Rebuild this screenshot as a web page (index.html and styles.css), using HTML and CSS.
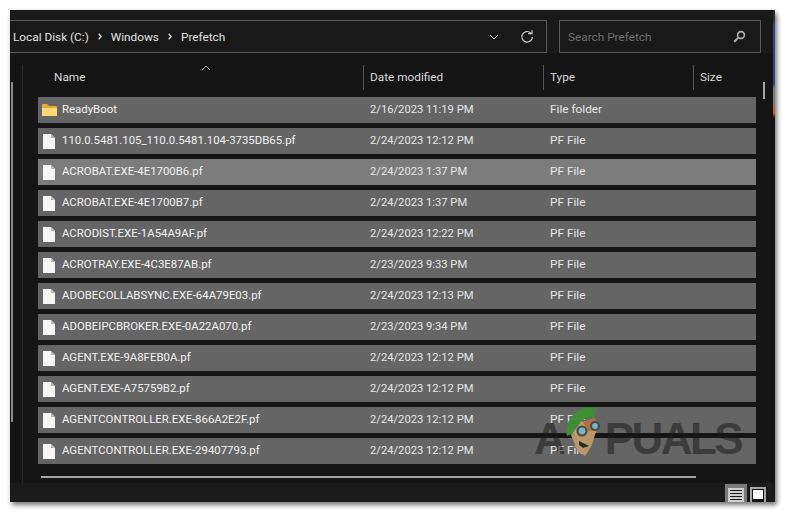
FILE: index.html
```html
<!DOCTYPE html>
<html lang="en">
<head>
<meta charset="utf-8">
<title>Prefetch</title>
<link rel="stylesheet" href="styles.css">
</head>
<body>
<svg class="defs" width="0" height="0" aria-hidden="true">
  <symbol id="file" viewBox="0 0 12 15"><path d="M0 0H8L12 4V15H0Z" fill="#f6f6f6"/><path d="M8 0V4H12Z" fill="#b5b5b5"/></symbol>
  <symbol id="folder" viewBox="0 0 15 12"><path d="M0 1Q0 0 1 0H5L7 2H14Q15 2 15 3V12H0Z" fill="#e3ad35"/><path d="M0 4H15V12H0Z" fill="#fcd670"/></symbol>
</svg>
<div class="window">
  <div class="top">
    <div class="address">
      <div class="crumbs">
        <span>Local Disk (C:)</span>
        <svg class="sep" width="4" height="7" viewBox="0 0 4 7"><path d="M0.7 0.7L3.2 3.5L0.7 6.3" fill="none" stroke="#ddd" stroke-width="1.3"/></svg>
        <span>Windows</span>
        <svg class="sep" width="4" height="7" viewBox="0 0 4 7"><path d="M0.7 0.7L3.2 3.5L0.7 6.3" fill="none" stroke="#ddd" stroke-width="1.3"/></svg>
        <span>Prefetch</span>
      </div>
      <svg class="chev" width="10" height="6" viewBox="0 0 10 6"><path d="M1 1L5 5L9 1" fill="none" stroke="#ddd" stroke-width="1"/></svg>
      <svg class="refresh" width="14" height="14" viewBox="0 0 14 14"><path d="M10.8 3A5.3 5.3 0 1 0 12.4 7" fill="none" stroke="#ccc" stroke-width="1.2"/><path d="M8 3.6H12V0.3" fill="none" stroke="#ccc" stroke-width="1.2"/></svg>
    </div>
    <div class="search">
      <span>Search Prefetch</span>
      <svg width="13" height="13" viewBox="0 0 13 13"><circle cx="8" cy="5" r="3.4" fill="none" stroke="#b5b5b5" stroke-width="1.6"/><path d="M5.4 7.6L1.2 11.8" stroke="#b5b5b5" stroke-width="2"/></svg>
    </div>
  </div>
  <div class="body">
    <div class="nav"><div class="nav-thumb"></div><div class="nav-line"></div></div>
    <div class="pane">
      <div class="sort-caret"><svg width="10" height="6" viewBox="0 0 10 6"><path d="M1 5L5 1L9 5" fill="none" stroke="#aaa" stroke-width="1"/></svg></div>
      <div class="head">
        <div class="col-name">Name</div>
        <div class="col-date">Date modified</div>
        <div class="col-type">Type</div>
        <div class="col-size">Size</div>
      </div>
      <div class="rows">
        <div class="row"><svg class="ico-folder"><use href="#folder"/></svg><span class="name">ReadyBoot</span><span class="date">2/16/2023 11:19 PM</span><span class="type">File folder</span></div>
        <div class="row"><svg class="ico"><use href="#file"/></svg><span class="name">110.0.5481.105_110.0.5481.104-3735DB65.pf</span><span class="date">2/24/2023 12:12 PM</span><span class="type">PF File</span></div>
        <div class="row hot"><svg class="ico"><use href="#file"/></svg><span class="name">ACROBAT.EXE-4E1700B6.pf</span><span class="date">2/24/2023 1:37 PM</span><span class="type">PF File</span></div>
        <div class="row"><svg class="ico"><use href="#file"/></svg><span class="name">ACROBAT.EXE-4E1700B7.pf</span><span class="date">2/24/2023 1:37 PM</span><span class="type">PF File</span></div>
        <div class="row"><svg class="ico"><use href="#file"/></svg><span class="name">ACRODIST.EXE-1A54A9AF.pf</span><span class="date">2/24/2023 12:22 PM</span><span class="type">PF File</span></div>
        <div class="row"><svg class="ico"><use href="#file"/></svg><span class="name">ACROTRAY.EXE-4C3E87AB.pf</span><span class="date">2/23/2023 9:33 PM</span><span class="type">PF File</span></div>
        <div class="row"><svg class="ico"><use href="#file"/></svg><span class="name">ADOBECOLLABSYNC.EXE-64A79E03.pf</span><span class="date">2/24/2023 12:13 PM</span><span class="type">PF File</span></div>
        <div class="row"><svg class="ico"><use href="#file"/></svg><span class="name">ADOBEIPCBROKER.EXE-0A22A070.pf</span><span class="date">2/23/2023 9:34 PM</span><span class="type">PF File</span></div>
        <div class="row"><svg class="ico"><use href="#file"/></svg><span class="name">AGENT.EXE-9A8FEB0A.pf</span><span class="date">2/24/2023 12:12 PM</span><span class="type">PF File</span></div>
        <div class="row"><svg class="ico"><use href="#file"/></svg><span class="name">AGENT.EXE-A75759B2.pf</span><span class="date">2/24/2023 12:12 PM</span><span class="type">PF File</span></div>
        <div class="row"><svg class="ico"><use href="#file"/></svg><span class="name">AGENTCONTROLLER.EXE-866A2E2F.pf</span><span class="date">2/24/2023 12:12 PM</span><span class="type">PF File</span></div>
        <div class="row"><svg class="ico"><use href="#file"/></svg><span class="name">AGENTCONTROLLER.EXE-29407793.pf</span><span class="date">2/24/2023 12:12 PM</span><span class="type">PF File</span></div>
      </div>
      <div class="hscroll"></div>
    </div>
    <div class="vscroll"><div class="vthumb"></div></div>
  </div>
  <div class="status">
    <div class="view active"><svg width="16" height="14" viewBox="0 0 16 14"><rect width="16" height="14" fill="#cfcfcf"/><path d="M2 2.5H14M2 5.5H14M2 8.5H14M2 11.5H14" stroke="#1a1a1a" stroke-width="1"/></svg></div>
    <div class="view"><div class="view-box"></div></div>
  </div>
  <div class="sliver"></div>
  <div class="watermark">
    <span class="wm-a">A</span>
    <svg class="mascot" width="38" height="52" viewBox="0 0 38 52">
      <path d="M7 30L16 18L31 13L33 24L27 42L21 51L13 45Z" fill="#b99768"/>
      <path d="M19 17L31 13L31 26L24 26Z" fill="#b4713f"/>
      <path d="M3 31C0 19 8 7 20 3C28 1 34 3 35 8L32 13C22 10 12 19 8 29Z" fill="#3e8e35"/>
      <path d="M30 5L35 6L35 11L31 13Z" fill="#666"/>
      <circle cx="18" cy="26" r="4.5" fill="#6fb7c9" stroke="#4a4a4a" stroke-width="2.2"/>
      <circle cx="31" cy="21" r="4" fill="#6fb7c9" stroke="#4a4a4a" stroke-width="2.2"/>
      <path d="M15 36L25 41L19 43L15 40Z" fill="#2d2d2d"/>
    </svg>
    <span class="wm-rest">PUALS</span>
  </div>
</div>
</body>
</html>
```
FILE: styles.css
```css
* { box-sizing: border-box; }
html, body { margin: 0; height: 100%; background: #fff; overflow: hidden; }
body { padding: 10px 11px 11px 10px; font-family: Roboto, "Open Sans", sans-serif; }
.defs { position: absolute; }
.window {
  position: relative;
  height: 492px;
  background: #191919;
  display: flex;
  flex-direction: column;
  box-shadow: 2px 3px 5px rgba(0,0,0,.55);
  color: #e6e6e6;
  font-size: 11.8px;
}
.top { display: flex; padding-top: 10px; height: 43px; flex: none; }
.address {
  width: 537px;
  border: 1px solid #5a5a5a;
  border-left: 0;
  display: flex;
  align-items: center;
  padding: 0 12px 0 3px;
}
.crumbs { display: flex; align-items: center; flex: 1; color: #e2e2e2; }
.sep { margin: 0 9px; }
.chev { margin-right: 21px; }
.search {
  margin-left: 12px;
  width: 202px;
  border: 1px solid #5a5a5a;
  display: flex;
  align-items: center;
  justify-content: space-between;
  padding: 0 14px 0 8px;
  color: #6f6f6f;
}
.body { flex: 1; display: flex; min-height: 0; background: #151515; }
.nav { width: 13px; flex: none; display: flex; }
.nav-thumb { width: 2px; height: 340px; margin: 29px 0 0 1px; background: #8a8a8a; }
.nav-line { width: 1px; margin: 12px 0 0 9px; background: #2b2b2b; }
.pane { position: relative; flex: none; width: 733px; padding: 12px 0 0 15px; }
.sort-caret { position: absolute; left: 178px; top: 12px; line-height: 0; }
.head { display: flex; height: 25px; color: #d8d8d8; }
.head > div { height: 25px; line-height: 24px; padding-left: 6px; border-left: 1px solid #555; }
.head .col-name { width: 325px; border-left: 0; padding-left: 16px; }
.col-date { width: 180px; }
.col-type { width: 150px; }
.col-size { width: 62px; }
.rows { margin-top: 7px; display: flex; flex-direction: column; gap: 5px; }
.row {
  height: 26px;
  width: 718px;
  background: #656565;
  display: flex;
  align-items: center;
  color: #f2f2f2;
  flex: none;
}
.row.hot { background: #7c7c7c; }
.ico { width: 12px; height: 15px; margin: 0 7px 0 5px; flex: none; }
.ico-folder { width: 15px; height: 12px; margin: 0 5px 0 4px; flex: none; }
.name { width: 308px; white-space: nowrap; font-size: 11.4px; margin-bottom: 2px; }
.date { width: 180px; color: #e6e6e6; font-size: 11.2px; margin-bottom: 2px; }
.type { color: #e6e6e6; margin-bottom: 2px; }
.hscroll { height: 2px; width: 655px; margin: 12px 0 0 3px; background: #a5a5a5; }
.vscroll { flex: 1; padding: 29px 0 0 7px; }
.vthumb { width: 2px; height: 17px; background: #a5a5a5; }
.status { height: 19px; flex: none; background: #1b1b1b; display: flex; justify-content: flex-end; align-items: flex-end; gap: 3px; padding-right: 9px; }
.view { width: 16px; height: 15px; background: #a8a8a8; display: flex; align-items: center; justify-content: center; padding: 2px 2px 0; }
.view.active { width: 22px; height: 18px; background: #7a7a7a; padding: 4px 3px 0; }
.view.active svg { display: block; }
.view-box { width: 12px; height: 13px; background: #fff; border: 1px solid #111; border-bottom-width: 3px; }
.sliver {
  position: absolute;
  right: 0;
  top: 0;
  bottom: 0;
  width: 2px;
  background: linear-gradient(#2c2c2c 0, #2c2c2c 2%, #2d4a7c 3%, #2d4a7c 15%, #7a7a7a 16%, #7a7a7a 19%, #b8622a 20%, #b8622a 21%, #111 22%, #111 96%, #1a1a1a 100%);
}
.watermark {
  position: absolute;
  left: 524px;
  top: 395px;
  display: flex;
  align-items: center;
  height: 52px;
  font-family: "Liberation Sans", sans-serif;
  font-weight: 700;
  font-size: 44px;
  line-height: 1;
  color: rgba(25,25,25,.55);
  pointer-events: none;
}
.mascot { margin: 0 0 0 -2px; flex: none; }
.wm-a { margin-top: 16px; }
.wm-rest { margin: 16px 0 0 3px; letter-spacing: -2.6px; }
```
